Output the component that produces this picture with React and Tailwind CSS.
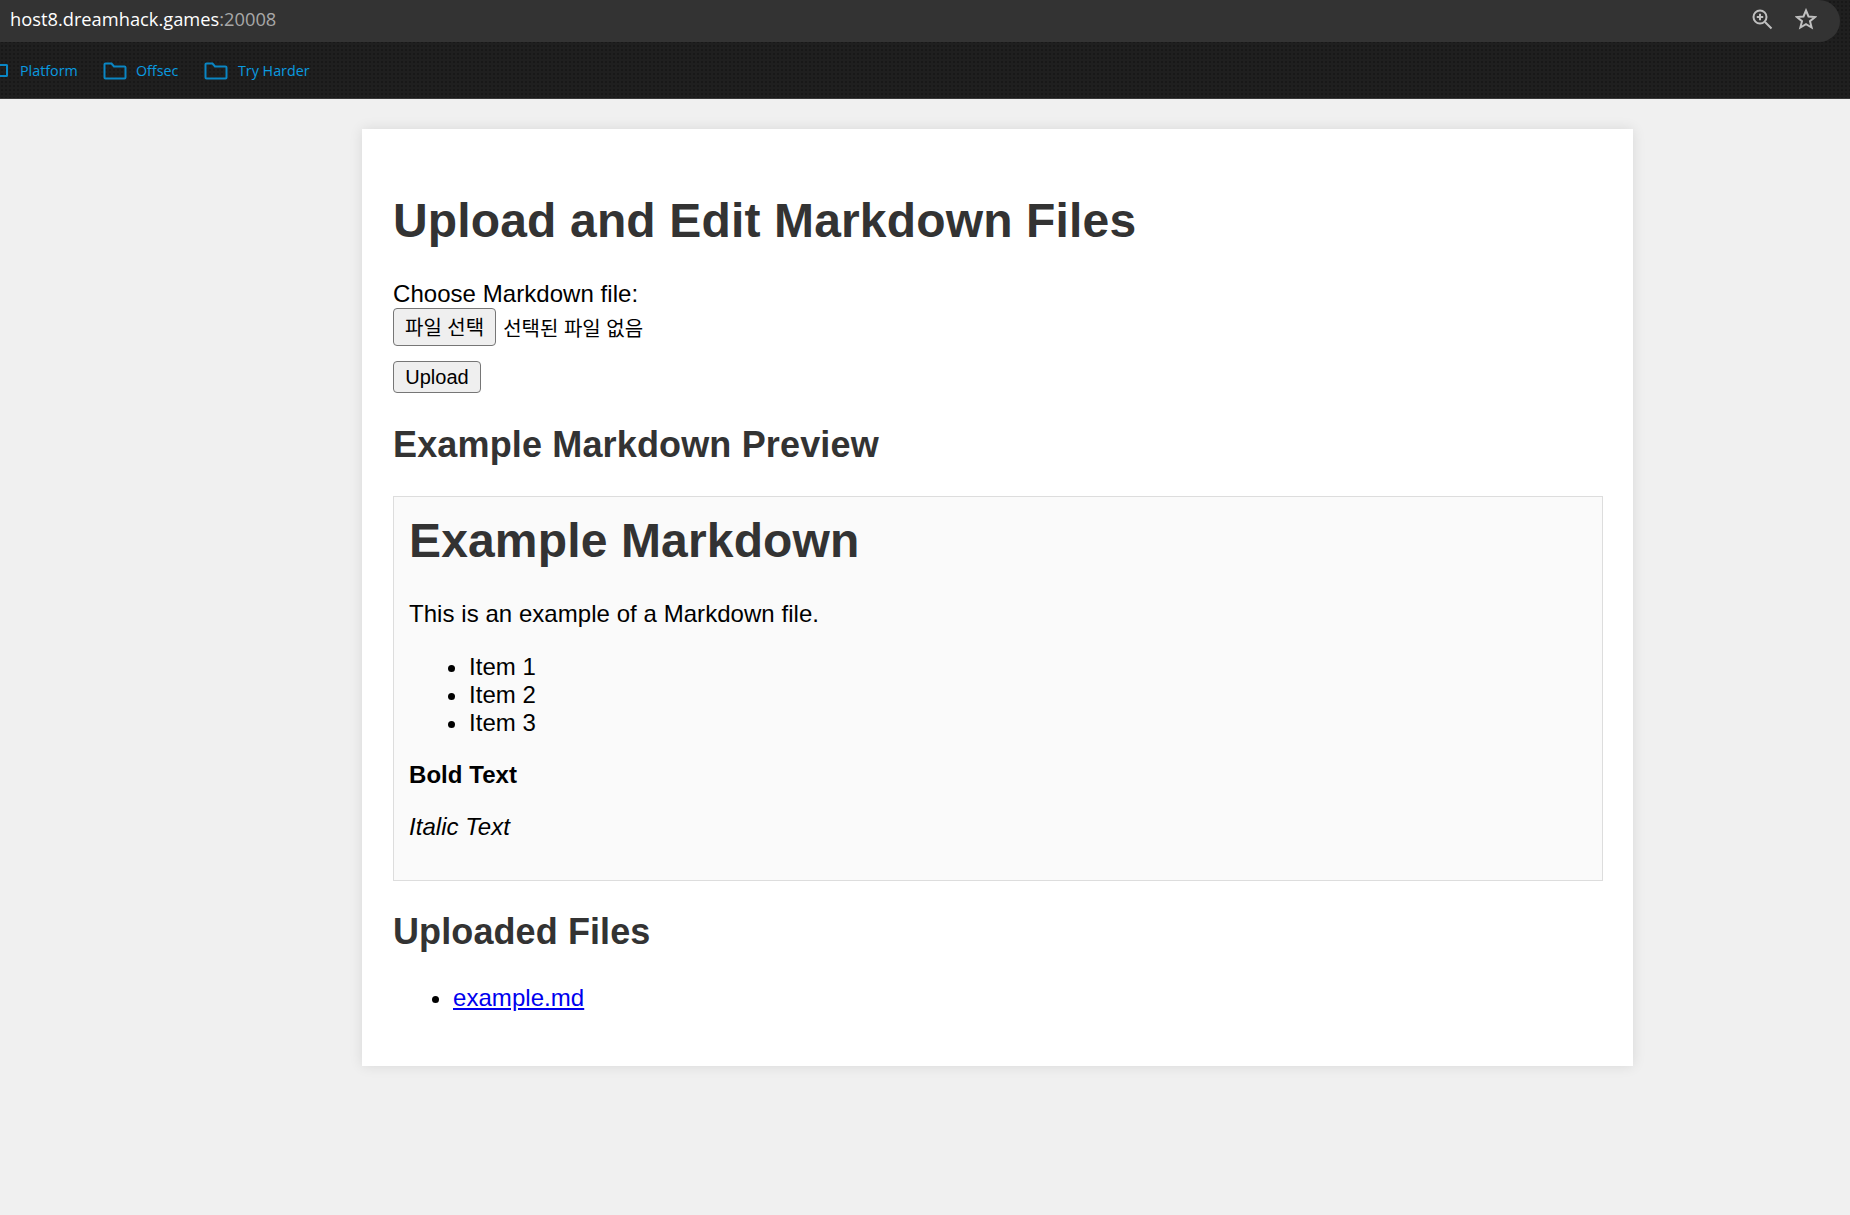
import React from "react";

const Folder = () => (
  <svg width="24" height="18" viewBox="0 0 24 18" fill="none" stroke="#0a86c4" strokeWidth="2" className="shrink-0">
    <path d="M1.500 15.500V2.500a1 1 0 0 1 1-1h6l2.500 3h10.500a1 1 0 0 1 1 1v10a1 1 0 0 1-1 1h-19a1 1 0 0 1-1-1z" />
  </svg>
);

export default function App() {
  return (
    <div className="min-h-[1215px] bg-[#f0f0f0] font-['Liberation_Sans','Noto_Sans_CJK_KR',sans-serif] text-[20px] leading-[28px] text-black">
      <header className="h-[99px] border-b border-[#3a3a3a] bg-[#1f1f1f] bg-[radial-gradient(#181818_1.2px,transparent_1.2px)] bg-[length:4px_4px]">
        <div className="flex h-[42px] w-[1840px] items-center justify-between rounded-r-[21px] bg-[#333333] pl-[10px] pr-[23px] pb-[4px]">
          <div className="font-['Open_Sans',sans-serif] text-[18.3px] text-white">
            host8.dreamhack.games<span className="text-[#a8a8a8]">:20008</span>
          </div>
          <div className="flex items-center gap-[22px] text-[#c0c0c0]">
            <svg width="22" height="22" viewBox="0 0 22 22" fill="none" stroke="currentColor" strokeWidth="2">
              <circle cx="9" cy="9" r="6.500" />
              <path d="M14 14l6.500 6.500M9 5.800v6.400M5.800 9h6.400" />
            </svg>
            <svg width="22" height="22" viewBox="0 0 22 22" fill="none" stroke="currentColor" strokeWidth="2">
              <path d="M11 2.500l2.500 6 6.500.5-5 4.200 1.600 6.300-5.600-3.400-5.600 3.400L7 13.200 2 9l6.500-.5z" />
            </svg>
          </div>
        </div>
        <nav className="flex h-[56px] items-center pt-[1px] font-['Open_Sans',sans-serif] text-[14.3px] text-[#0a9be0]">
          <div className="flex w-[103px] items-center gap-[12px]">
            <div className="h-[13px] w-[8px] rounded-r-[2px] border-2 border-l-0 border-[#0a86c4]" />
            <span>Platform</span>
          </div>
          <div className="flex w-[101px] items-center gap-[9px]">
            <Folder />
            <span>Offsec</span>
          </div>
          <div className="flex items-center gap-[10px]">
            <Folder />
            <span>Try Harder</span>
          </div>
        </nav>
      </header>
      <main className="mt-[30px] ml-[362px] h-[937px] w-[1271px] bg-white pt-[38px] pr-[30px] pb-[31px] pl-[31px] shadow-[0_0_12.5px_rgba(0,0,0,0.1)]">
        <h1 className="mt-[26px] mb-[31px] text-[48px] font-bold leading-[56px] tracking-[0.15px] text-[#333]">Upload and Edit Markdown Files</h1>
        <label className="block text-[24px] leading-[28px] tracking-[0.05px]">Choose Markdown file:</label>
        <div className="flex h-[38px] items-center">
          <button className="h-[38px] rounded-[4px] border border-[#767676] bg-[#efefef] px-[11px] pt-[2px] text-[20px]">파일 선택</button>
          <span className="ml-[7px] pt-[3px] text-[20px]">선택된 파일 없음</span>
        </div>
        <button className="mt-[15px] block h-[32px] w-[88px] rounded-[4px] border border-[#767676] bg-[#efefef] text-[20px]">Upload</button>
        <h2 className="mt-[31px] mb-[30px] text-[36px] font-bold leading-[42px] tracking-[0.15px] text-[#333]">Example Markdown Preview</h2>
        <section className="h-[385px] border border-[#ddd] bg-[#fafafa] px-[15px] pt-[16px]">
          <h1 className="mb-[31px] text-[48px] font-bold leading-[56px] tracking-[0.15px] text-[#333]">Example Markdown</h1>
          <p className="text-[24px] leading-[28px] tracking-[0.05px]">This is an example of a Markdown file.</p>
          <ul className="mt-[25px] list-disc pl-[60px] text-[24px] leading-[28px] tracking-[0.05px]">
            <li>Item 1</li>
            <li>Item 2</li>
            <li>Item 3</li>
          </ul>
          <p className="mt-[24px] text-[24px] font-bold leading-[28px] tracking-[0.05px]">Bold Text</p>
          <p className="mt-[24px] text-[24px] italic leading-[28px] tracking-[0.05px]">Italic Text</p>
        </section>
        <h2 className="mt-[30px] mb-[31px] text-[36px] font-bold leading-[42px] tracking-[0.1px] text-[#333]">Uploaded Files</h2>
        <ul className="list-disc pl-[60px] text-[24px] leading-[28px] tracking-[0.05px]">
          <li><a href="#" className="text-[#0000ee] underline">example.md</a></li>
        </ul>
      </main>
    </div>
  );
}
